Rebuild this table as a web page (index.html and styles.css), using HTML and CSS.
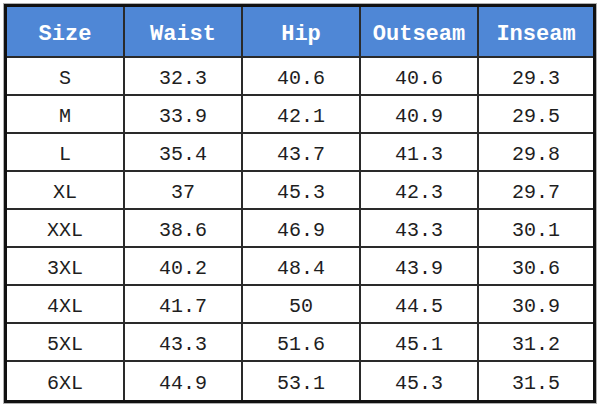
FILE: index.html
```html
<!DOCTYPE html>
<html>
<head>
<meta charset="utf-8">
<link rel="stylesheet" href="styles.css">
</head>
<body>
<div class="chart">
  <div class="hd">Size</div><div class="hd">Waist</div><div class="hd">Hip</div><div class="hd">Outseam</div><div class="hd">Inseam</div>
  <div class="c">S</div><div class="c">32.3</div><div class="c">40.6</div><div class="c">40.6</div><div class="c">29.3</div>
  <div class="c">M</div><div class="c">33.9</div><div class="c">42.1</div><div class="c">40.9</div><div class="c">29.5</div>
  <div class="c">L</div><div class="c">35.4</div><div class="c">43.7</div><div class="c">41.3</div><div class="c">29.8</div>
  <div class="c">XL</div><div class="c">37</div><div class="c">45.3</div><div class="c">42.3</div><div class="c">29.7</div>
  <div class="c">XXL</div><div class="c">38.6</div><div class="c">46.9</div><div class="c">43.3</div><div class="c">30.1</div>
  <div class="c">3XL</div><div class="c">40.2</div><div class="c">48.4</div><div class="c">43.9</div><div class="c">30.6</div>
  <div class="c">4XL</div><div class="c">41.7</div><div class="c">50</div><div class="c">44.5</div><div class="c">30.9</div>
  <div class="c">5XL</div><div class="c">43.3</div><div class="c">51.6</div><div class="c">45.1</div><div class="c">31.2</div>
  <div class="c">6XL</div><div class="c">44.9</div><div class="c">53.1</div><div class="c">45.3</div><div class="c">31.5</div>
</div>
</body>
</html>
```
FILE: styles.css
```css
html, body {
  margin: 0;
  padding: 0;
  background: #ffffff;
}
body {
  padding: 4px;
  width: 600px;
  height: 408px;
  box-sizing: border-box;
}
.chart {
  display: grid;
  grid-template-columns: 116px 116px 116px 116px 114px;
  grid-template-rows: 49px repeat(8, 36px) 38px;
  gap: 2px;
  width: 592px;
  box-sizing: border-box;
  border: 3px solid #111;
  background: #2a2a2a;
  box-shadow: 0 0 0 1px #b0b0b0;
  font-family: "Liberation Mono", "DejaVu Sans Mono", monospace;
}
.hd {
  background: #4f87d6;
  color: #ffffff;
  font-weight: bold;
  font-size: 22px;
  display: flex;
  align-items: center;
  justify-content: center;
  padding-top: 5px;
  box-sizing: border-box;
}
.c {
  background: #ffffff;
  color: #1e1e1e;
  font-size: 20px;
  display: flex;
  align-items: center;
  justify-content: center;
  padding-top: 4px;
  box-sizing: border-box;
}
```
